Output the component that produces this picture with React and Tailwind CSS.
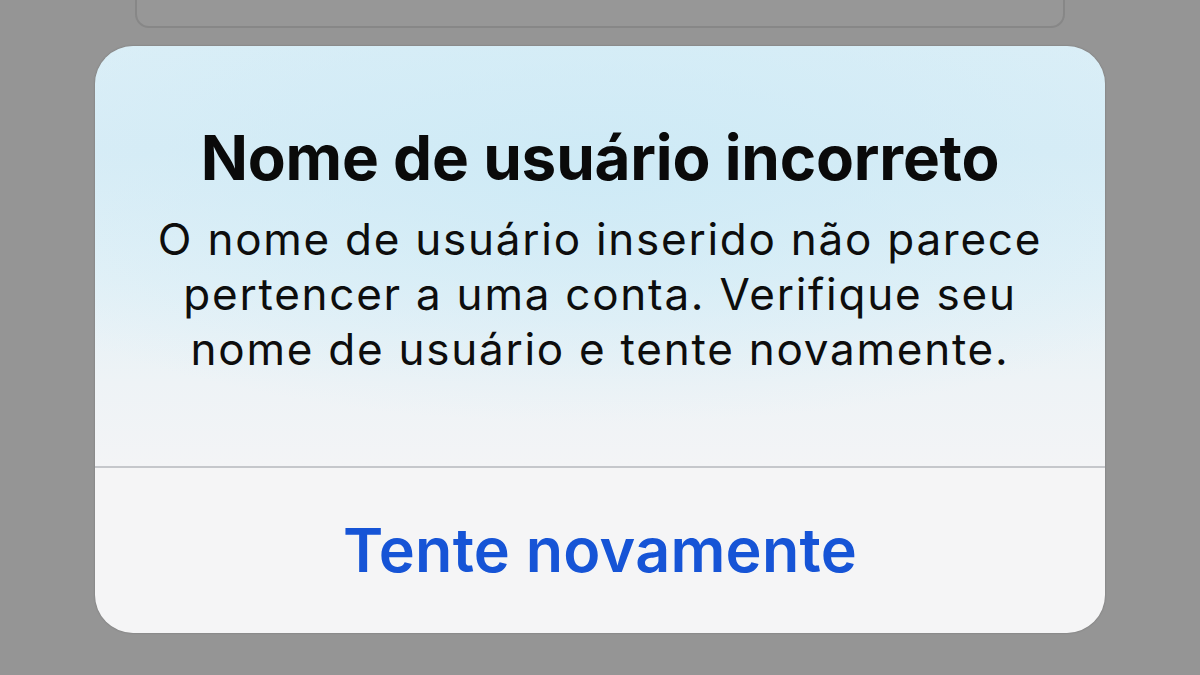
export default function App() {
  return (
    <div className="h-[675px] w-[1200px] overflow-hidden bg-[#959595] flex flex-col items-center" style={{ fontFamily: "Inter, 'Noto Sans', sans-serif" }}>
      <div className="-mt-[32px] h-[60px] w-[930px] shrink-0 rounded-[14px] border-2 border-[#878787] bg-[#979797]" />
      <div className="mt-[18px] w-[1010px] h-[587px] shrink-0 overflow-hidden rounded-[38px] flex flex-col shadow-[0_0_2px_rgba(0,0,0,0.25)]">
        <div className="h-[420px] flex flex-col items-center bg-[radial-gradient(ellipse_70%_60%_at_50%_30%,rgba(205,234,246,0.9)_0%,rgba(205,234,246,0)_100%),linear-gradient(180deg,#dceff7_0%,#d9edf6_25%,#e3f1f7_55%,#eef3f6_80%,#f3f4f6_100%)]">
          <h1 className="mt-[77px] text-[62px] leading-[70px] font-bold text-[#0a0a0a] tracking-[-0.2px]">
            Nome de usuário incorreto
          </h1>
          <p className="mt-[19px] text-center text-[44px] leading-[55px] text-[#0d0d0d] tracking-[1.75px]">
            O nome de usuário inserido não parece
            <br />
            pertencer a uma conta. Verifique seu
            <br />
            nome de usuário e tente novamente.
          </p>
        </div>
        <div className="h-[2px] bg-[#c5c7cb]" />
        <div className="flex-1 bg-[#f5f5f6] flex items-center justify-center">
          <span className="text-[61px] font-semibold text-[#1654d6] tracking-[0.25px]">Tente novamente</span>
        </div>
      </div>
    </div>
  );
}
